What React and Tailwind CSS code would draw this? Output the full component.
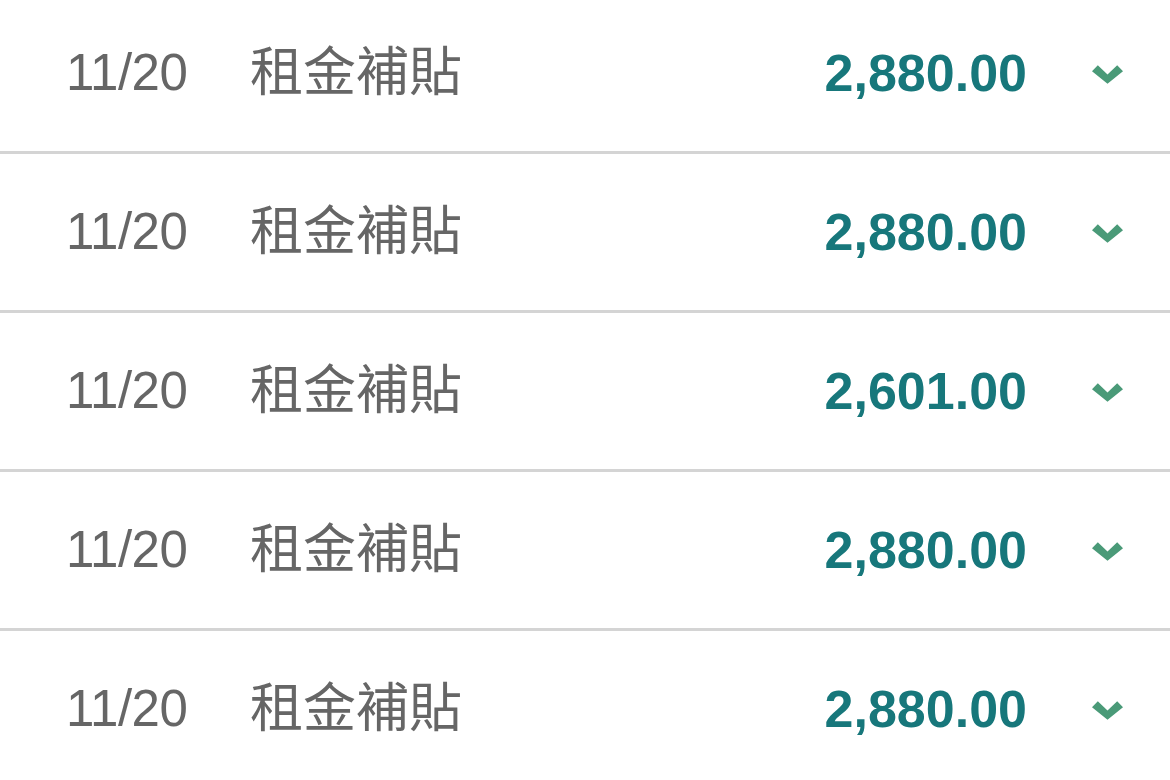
import React from 'react';

const rows = [
  { date: '11/20', label: '租金補貼', amount: '2,880.00' },
  { date: '11/20', label: '租金補貼', amount: '2,880.00' },
  { date: '11/20', label: '租金補貼', amount: '2,601.00' },
  { date: '11/20', label: '租金補貼', amount: '2,880.00' },
  { date: '11/20', label: '租金補貼', amount: '2,880.00' },
];

const Chevron = () => (
  <svg width="31" height="20" viewBox="0 0 32 20" className="shrink-0">
    <polygon points="0,6 6,0 16,9.5 26,0 32,6 16,19" fill="#4a9a78" />
  </svg>
);

export default function App() {
  return (
    <div
      className="h-[780px] w-[1170px] overflow-hidden bg-white"
      style={{ fontFamily: '"Liberation Sans", "Noto Sans CJK TC", sans-serif' }}
    >
      <div className="-mt-[5px]">
        {rows.map((row, i) => (
          <div
            key={i}
            className="flex h-[159px] items-center border-b-[3px] border-[#d4d4d4] pl-[66px] pr-[47px]"
          >
            <span className="w-[184px] text-[51px] tracking-[-0.5px] text-[#666666]">{row.date}</span>
            <span className="text-[53px] text-[#666666]">{row.label}</span>
            <span className="ml-auto text-[52px] font-bold text-[#17777b]">{row.amount}</span>
            <span className="ml-[65px] pt-1">
              <Chevron />
            </span>
          </div>
        ))}
      </div>
    </div>
  );
}
